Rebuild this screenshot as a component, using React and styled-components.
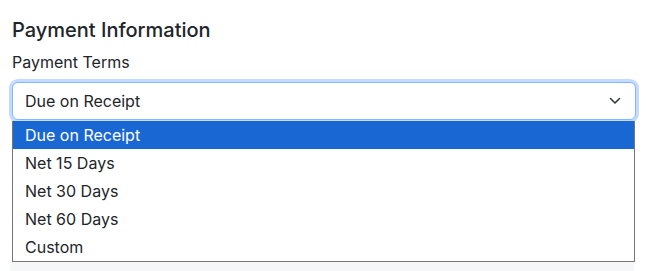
import React, { useState } from 'react';
import styled, { createGlobalStyle } from 'styled-components';

const GlobalStyle = createGlobalStyle`
  body {
    margin: 0;
    background: #fff;
    font-family: 'Inter', 'Liberation Sans', sans-serif;
    color: #212529;
  }
`;

const terms = ['Due on Receipt', 'Net 15 Days', 'Net 30 Days', 'Net 60 Days', 'Custom'];

const Section = styled.div`
  padding: 14px 14px 0 12px;
`;

const Title = styled.h2`
  margin: 0 0 6px;
  font-size: 20px;
  font-weight: 500;
  line-height: 32px;
`;

const Label = styled.label`
  display: block;
  font-size: 16px;
  line-height: 20px;
  margin-bottom: 10px;
`;

const Field = styled.div`
  position: relative;
`;

const SelectBox = styled.div`
  display: flex;
  align-items: center;
  justify-content: space-between;
  height: 38px;
  box-sizing: border-box;
  padding: 0 14px 0 12px;
  border: 1px solid #86b7fe;
  border-radius: 6px;
  box-shadow: 0 0 0 3px rgba(13, 110, 253, 0.25);
  font-size: 16px;
  background: #fff;
`;

const Chevron = () => (
  <svg width="12" height="8" viewBox="0 0 12 8" fill="none">
    <path d="M1.5 1.5L6 6l4.5-4.5" stroke="#343a40" strokeWidth="1.6" strokeLinecap="round" strokeLinejoin="round" />
  </svg>
);

const Menu = styled.ul`
  position: absolute;
  left: 0;
  right: 1px;
  top: 39px;
  margin: 0;
  padding: 0;
  list-style: none;
  background: #fff;
  border: 1px solid #767676;
  border-top: none;
  z-index: 2;
`;

const Option = styled.li`
  height: 28px;
  line-height: 28px;
  padding-left: 12px;
  font-size: 16px;
  background: ${(p) => (p.$active ? '#1967d2' : '#fff')};
  color: ${(p) => (p.$active ? '#fff' : '#212529')};
`;

const NextField = styled.div`
  margin: 142px 2px 0 -2px;
  height: 12px;
  background: #f6f7f9;
`;

export default function App() {
  const [value] = useState(terms[0]);
  return (
    <>
      <GlobalStyle />
      <Section>
        <Title>Payment Information</Title>
        <Label>Payment Terms</Label>
        <Field>
          <SelectBox>
            <span>{value}</span>
            <Chevron />
          </SelectBox>
          <Menu>
            {terms.map((t) => (
              <Option key={t} $active={t === value}>
                {t}
              </Option>
            ))}
          </Menu>
        </Field>
        <NextField />
      </Section>
    </>
  );
}
